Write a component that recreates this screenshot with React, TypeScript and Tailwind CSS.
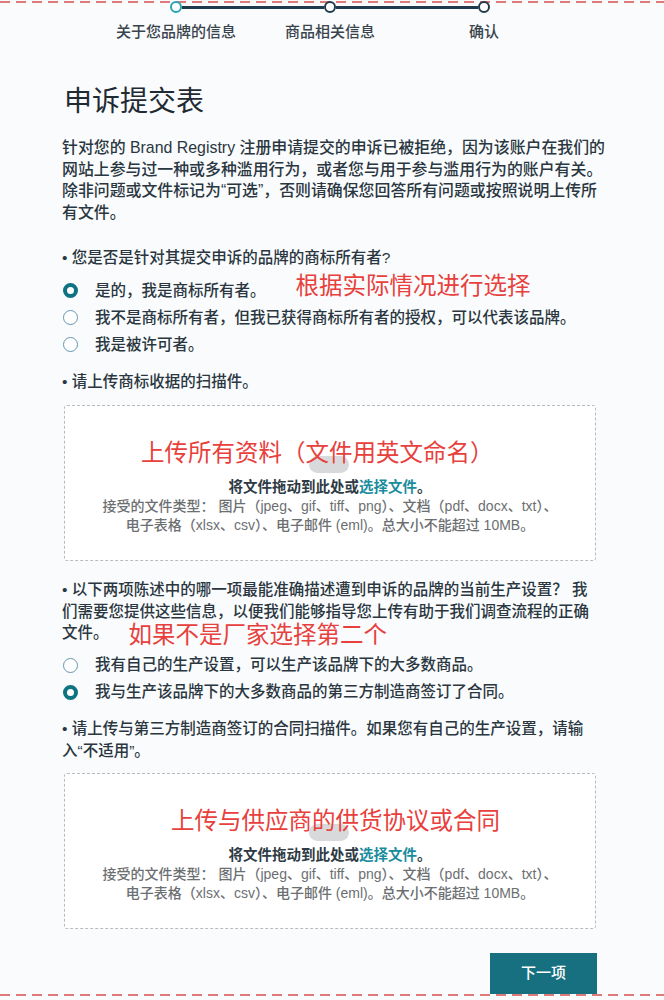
import React, { useState } from 'react';

const FONT = "font-['Helvetica','Liberation_Sans','Noto_Sans_CJK_SC',sans-serif]";

const DashedLine: React.FC<{ className: string }> = ({ className }) => (
    <div
        className={`absolute left-0 right-0 h-[2px] bg-[repeating-linear-gradient(90deg,#e07a7a_0_10px,transparent_10px_16px)] ${className}`}
    />
);

interface RadioProps {
    checked: boolean;
    label: string;
    onSelect: () => void;
    children?: React.ReactNode;
}

const Radio: React.FC<RadioProps> = ({ checked, label, onSelect, children }) => (
    <div className="flex items-center h-[27px] cursor-pointer" onClick={onSelect}>
        <span
            className={`ml-[1px] w-[15px] h-[15px] shrink-0 rounded-full bg-white ${
                checked ? 'border-[4.5px] border-[#0e7380]' : 'border-[1.5px] border-[#6497b0]'
            }`}
        />
        <span className="ml-[17px] whitespace-nowrap">{label}</span>
        {children}
    </div>
);

const UploadBox: React.FC<{ note: string; notePad: string }> = ({ note, notePad }) => (
    <div className="relative ml-[2px] w-[532px] h-[156px] bg-white border border-dashed border-[#b9bcbf] rounded-[3px]">
        {/* cloud icon mostly hidden behind the note */}
        <div className="absolute left-[244px] top-[50px] w-[40px] h-[17px] rounded-[9px] bg-[#d8d9db]" />
        <div className={`relative pt-[32px] ${notePad} text-[23.5px] leading-[30px] font-normal text-[#e8403c] whitespace-nowrap`}>
            {note}
        </div>
        <div className="mt-[9px] text-center text-[14.5px] leading-[20px] font-bold text-[#2e3a44]">
            将文件拖动到此处或<span className="text-[#1b8d9d]">选择文件</span>。
        </div>
        <div className="text-center text-[14px] leading-[19px] text-[#6c6f72] whitespace-nowrap">
            接受的文件类型： 图片（jpeg、gif、tiff、png）、文档（pdf、docx、txt）、
            <br />
            电子表格（xlsx、csv）、电子邮件 (eml)。总大小不能超过 10MB。
        </div>
    </div>
);

const Stepper: React.FC = () => {
    const steps = ['关于您品牌的信息', '商品相关信息', '确认'];
    return (
        <div>
            <div className="relative ml-[170px] w-[320px] pt-[1px] flex items-center">
                <span className="w-[12px] h-[12px] rounded-full border-[2.5px] border-[#2aa5b5] bg-white shrink-0" />
                <span className="flex-1 h-[3px] bg-[#1f3a4c]" />
                <span className="w-[12px] h-[12px] rounded-full border-[2.5px] border-[#1f3a4c] bg-white shrink-0" />
                <span className="flex-1 h-[3px] bg-[#1f3a4c]" />
                <span className="w-[12px] h-[12px] rounded-full border-[2.5px] border-[#1f3a4c] bg-white shrink-0" />
            </div>
            <div className="ml-[99px] mt-[9px] flex">
                {steps.map(step => (
                    <div key={step} className="w-[154px] text-center text-[15px] leading-[20px] font-medium text-[#39444d] whitespace-nowrap">
                        {step}
                    </div>
                ))}
            </div>
        </div>
    );
};

const App: React.FC = () => {
    const [owner, setOwner] = useState(0);
    const [production, setProduction] = useState(1);

    const ownerOptions = [
        '是的，我是商标所有者。',
        '我不是商标所有者，但我已获得商标所有者的授权，可以代表该品牌。',
        '我是被许可者。',
    ];
    const productionOptions = [
        '我有自己的生产设置，可以生产该品牌下的大多数商品。',
        '我与生产该品牌下的大多数商品的第三方制造商签订了合同。',
    ];

    return (
        <div className={`relative w-[664px] h-[1000px] overflow-hidden bg-[#f9fbfc] ${FONT}`}>
            <DashedLine className="top-[1px]" />
            <DashedLine className="bottom-[4px]" />

            <div className="relative">
                <Stepper />

                <div className="ml-[62px] w-[560px] text-[15.5px] font-medium text-[#2a3640]">
                    <h1 className="ml-[2px] mt-[43px] text-[28px] leading-[34px] font-normal text-[#1f2a33]">申诉提交表</h1>

                    <p className="mt-[18px] text-[15.9px] leading-[21.5px] whitespace-nowrap">
                        针对您的 Brand Registry 注册申请提交的申诉已被拒绝，因为该账户在我们的
                        <br />
                        网站上参与过一种或多种滥用行为，或者您与用于参与滥用行为的账户有关。
                        <br />
                        除非问题或文件标记为“可选”，否则请确保您回答所有问题或按照说明上传所
                        <br />
                        有文件。
                    </p>

                    <p className="mt-[24px] leading-[22px]">• 您是否是针对其提交申诉的品牌的商标所有者?</p>

                    <div className="mt-[8px]">
                        {ownerOptions.map((opt, i) => (
                            <Radio key={opt} checked={owner === i} label={opt} onSelect={() => setOwner(i)}>
                                {i === 0 && (
                                    <span className="ml-[30px] mb-[10px] text-[23.5px] leading-[30px] font-normal text-[#e8403c] whitespace-nowrap">
                                        根据实际情况进行选择
                                    </span>
                                )}
                            </Radio>
                        ))}
                    </div>

                    <p className="mt-[13px] leading-[22px]">• 请上传商标收据的扫描件。</p>

                    <div className="mt-[12px]">
                        <UploadBox note="上传所有资料（文件用英文命名）" notePad="pl-[76px]" />
                    </div>

                    <p className="mt-[18px] leading-[21.5px] whitespace-nowrap">
                        • 以下两项陈述中的哪一项最能准确描述遭到申诉的品牌的当前生产设置？ 我
                        <br />
                        们需要您提供这些信息，以便我们能够指导您上传有助于我们调查流程的正确
                        <br />
                        文件。
                        <span className="inline-block ml-[20px] align-[-5px] text-[23.5px] leading-[21.5px] font-normal text-[#e8403c]">
                            如果不是厂家选择第二个
                        </span>
                    </p>

                    <div className="mt-[5px]">
                        {productionOptions.map((opt, i) => (
                            <Radio key={opt} checked={production === i} label={opt} onSelect={() => setProduction(i)} />
                        ))}
                    </div>

                    <p className="mt-[12px] leading-[22px] whitespace-nowrap">
                        • 请上传与第三方制造商签订的合同扫描件。如果您有自己的生产设置，请输
                        <br />
                        入“不适用”。
                    </p>

                    <div className="mt-[11px]">
                        <UploadBox note="上传与供应商的供货协议或合同" notePad="pl-[106px]" />
                    </div>

                    <div className="mt-[24px] w-[535px] flex justify-end">
                        <button
                            type="button"
                            className="w-[107px] h-[41px] bg-[#17707f] text-white text-[15px] font-medium"
                        >
                            下一项
                        </button>
                    </div>
                </div>
            </div>
        </div>
    );
};

export default App;
